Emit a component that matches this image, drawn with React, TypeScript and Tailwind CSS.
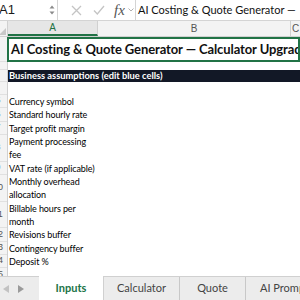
import React from "react";

const rows: { label: string[]; num: string }[] = [
  { label: ["Currency symbol"], num: "5" },
  { label: ["Standard hourly rate"], num: "6" },
  { label: ["Target profit margin"], num: "7" },
  { label: ["Payment processing", "fee"], num: "8" },
  { label: ["VAT rate (if applicable)"], num: "9" },
  { label: ["Monthly overhead", "allocation"], num: "10" },
  { label: ["Billable hours per", "month"], num: "11" },
  { label: ["Revisions buffer"], num: "12" },
  { label: ["Contingency buffer"], num: "13" },
  { label: ["Deposit %"], num: "14" },
  { label: [""], num: "15" },
];

const tabs = ["Inputs", "Calculator", "Quote", "AI Prompt"];

export default function App() {
  return (
    <div className="w-[300px] h-[300px] overflow-hidden bg-white flex flex-col font-['Lato',sans-serif] text-[#1a1a1a]">
      {/* Formula bar */}
      <div className="h-[21px] shrink-0 flex items-center border-b border-[#d4d4d4] overflow-hidden">
        <div className="w-[58px] shrink-0 h-full flex items-center justify-between pr-[2px] border-r border-[#d4d4d4] font-['Liberation_Sans',sans-serif]">
          <span className="text-[13px] -ml-[1px]">A1</span>
          <svg width="6" height="12" viewBox="0 0 6 12">
            <path d="M0.5 4.5 L3 1.5 L5.5 4.5 Z" fill="#8a8a8a" />
            <path d="M0.5 7.5 L3 10.5 L5.5 7.5 Z" fill="#8a8a8a" />
          </svg>
        </div>
        <div className="w-[78px] shrink-0 h-full flex items-center pl-[13px] border-r border-[#d4d4d4]">
          <svg width="11" height="11" viewBox="0 0 11 11">
            <path d="M1 1 L10 10 M10 1 L1 10" stroke="#c4c4c4" strokeWidth="1.3" />
          </svg>
          <svg width="12" height="10" viewBox="0 0 12 10" className="ml-[11px]">
            <path d="M1 5.5 L4.3 9 L11 1" stroke="#c4c4c4" strokeWidth="1.3" fill="none" />
          </svg>
          <span className="ml-[9px] font-['Liberation_Serif',serif] italic text-[15px] text-[#555] leading-none">fx</span>
          <svg width="6" height="4" viewBox="0 0 6 4" className="ml-[3px]">
            <path d="M0.5 0.5 L3 3 L5.5 0.5" stroke="#b0b0b0" fill="none" />
          </svg>
        </div>
        <span className="pl-[2px] text-[11px] whitespace-nowrap text-[#111]">
          AI Costing &amp; Quote Generator —
        </span>
      </div>

      {/* Column headers */}
      <div className="h-[16px] shrink-0 flex bg-[#f3f3f3] border-b border-[#d0d0d0] text-[10px] font-['Liberation_Sans',sans-serif]">
        <div className="w-[8px] shrink-0 border-r border-[#d0d0d0] relative">
          <svg width="7" height="7" viewBox="0 0 7 7" className="absolute right-[1px] bottom-[1px]">
            <path d="M7 0 L7 7 L0 7 Z" fill="#c8c8c8" />
          </svg>
        </div>
        <div className="w-[90px] shrink-0 flex items-center justify-center text-[#1e7145] bg-[#e6e6e6] border-b-2 border-[#217346] border-r border-r-[#d0d0d0]">
          A
        </div>
        <div className="w-[193px] shrink-0 flex items-center justify-center text-[#555] border-r border-[#d0d0d0]">
          B
        </div>
        <div className="flex-1 flex items-center justify-center text-[#555]">C</div>
      </div>

      {/* Sheet */}
      <div className="flex-1 flex min-h-0 overflow-hidden">
        <div className="w-[8px] shrink-0 bg-[#f3f3f3] border-r border-[#d0d0d0] text-[9px] text-[#555] font-['Liberation_Sans',sans-serif] flex flex-col overflow-hidden">
          <div className="h-[25px] shrink-0 border-b border-[#e0e0e0]" />
          <div className="h-[8px] shrink-0 border-b border-[#e0e0e0]" />
          <div className="h-[12px] shrink-0 border-b border-[#e0e0e0]" />
          <div className="h-[13px] shrink-0 border-b border-[#e0e0e0]" />
          {rows.map((r) => (
            <div
              key={r.num}
              className="shrink-0 w-[22px] -ml-[13px] border-b border-[#e0e0e0] flex items-center justify-center"
              style={{ height: r.label.length * 13.33 }}
            >
              {r.num}
            </div>
          ))}
        </div>

        <div className="flex-1 min-w-0 flex flex-col">
          <div className="h-[25px] shrink-0 border-2 border-[#217346] -ml-[1px] flex items-center pl-[2px] overflow-hidden">
            <span className="text-[13px] font-bold whitespace-nowrap tracking-[-0.1px] text-[#111]">
              AI Costing &amp; Quote Generator — Calculator Upgrade
            </span>
          </div>
          <div className="h-[8px] shrink-0" />
          <div className="h-[12px] shrink-0 bg-[#121826] flex items-center pl-[1px]">
            <span className="text-white text-[9.3px] font-bold whitespace-nowrap leading-none">
              Business assumptions (edit blue cells)
            </span>
          </div>
          <div className="h-[13px] shrink-0" />
          {rows.map((r) => (
            <div key={r.num} className="shrink-0 pl-[1px] text-[9px] leading-[13.33px] whitespace-nowrap text-black tracking-[-0.1px]">
              {r.label.map((l, i) => (
                <div key={i} className="h-[13.33px]">{l}</div>
              ))}
            </div>
          ))}
        </div>
      </div>

      {/* Sheet tabs */}
      <div className="h-[24px] shrink-0 flex bg-[#ececec] border-t border-[#d0d0d0] text-[11px]">
        <div className="w-[39px] shrink-0 flex items-center pl-[3px] gap-[9px]">
          <svg width="6" height="8" viewBox="0 0 6 8">
            <path d="M6 0 L0 4 L6 8 Z" fill="#c2c2c2" />
          </svg>
          <svg width="6" height="8" viewBox="0 0 6 8">
            <path d="M0 0 L6 4 L0 8 Z" fill="#9a9a9a" />
          </svg>
        </div>
        {tabs.map((t, i) => (
          <div
            key={t}
            className={
              i === 0
                ? "w-[65px] shrink-0 -mt-[1px] bg-white flex items-center justify-center text-[#217346] font-bold border-r border-[#d0d0d0]"
                : i === 3
                ? "w-[70px] shrink-0 flex items-center pl-[14px] text-[#444] whitespace-nowrap"
                : `${i === 1 ? "w-[76px]" : "w-[66px]"} shrink-0 flex items-center justify-center text-[#444] border-r border-[#c8c8c8]`
            }
          >
            {t}
          </div>
        ))}
      </div>
    </div>
  );
}
